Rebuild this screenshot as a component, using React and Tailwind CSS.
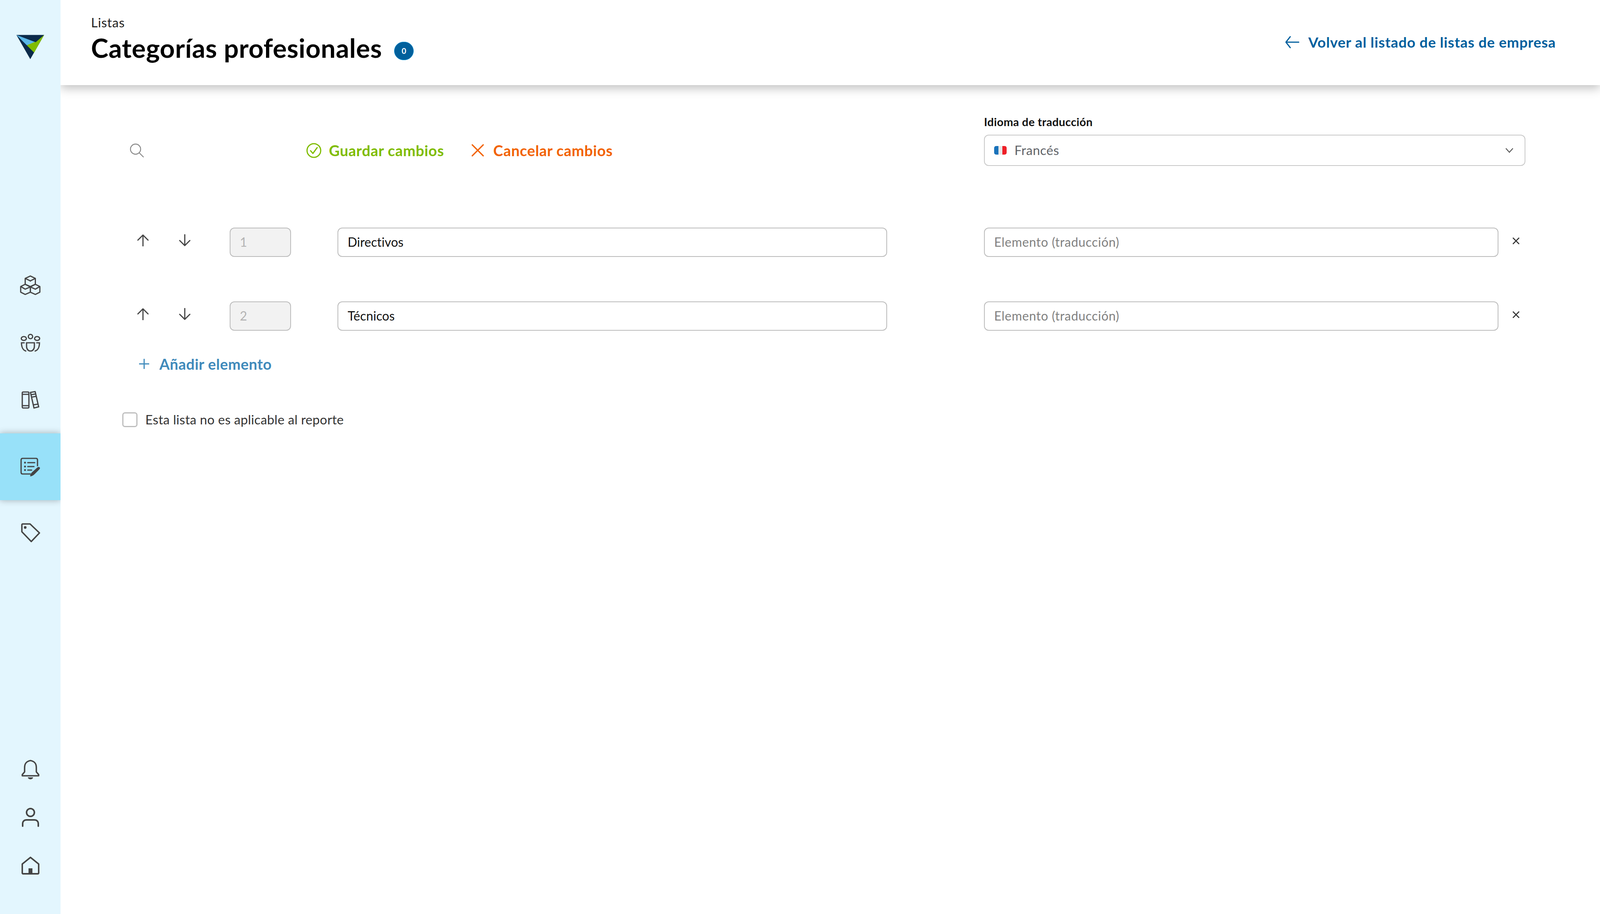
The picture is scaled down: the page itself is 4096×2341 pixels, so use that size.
import React from "react";

const INK = "#444444";

function Logo() {
  return (
    <svg width="71" height="63" viewBox="0 0 72 63">
      <path d="M0 0H72L36 63Z" fill="#0b2a4a" />
      <path d="M0 0L50 19L27 27Z" fill="#5bb7e8" />
      <path d="M27 27L48 18L50 19L72 0L46 46Z" fill="#80bc00" />
    </svg>
  );
}

function BoxesIcon() {
  return (
    <svg width="53" height="51" viewBox="-1 -1 55 53" fill="none" stroke={INK} strokeWidth="3.2" strokeLinejoin="round">
      <path d="M26.7 1L40 7.5V23L26.7 29L13 23V7.5Z" />
      <path d="M13 7.5L26.7 14L40 7.5M26.7 14V16" />
      <path d="M13 23L1 29V44L13 50L26.7 44V30L13 23Z" />
      <path d="M1 29L13 36L26.7 30" />
      <path d="M40 23L52 29V44L40 50L26.7 44V30L40 23Z" />
      <path d="M26.7 30L40 36L52 29" />
    </svg>
  );
}

function PeopleIcon() {
  return (
    <svg width="50" height="46" viewBox="0 0 50 46" fill="none" stroke={INK} strokeWidth="3.2" strokeLinecap="round">
      <circle cx="25" cy="7" r="5.5" />
      <ellipse cx="8" cy="12" rx="6.5" ry="5" />
      <ellipse cx="42" cy="12" rx="6.5" ry="5" />
      <path d="M15 23H35V32C35 39 31 44 25 44C19 44 15 39 15 32Z" />
      <path d="M9 23H2C2 34 6 42 13 44" />
      <path d="M41 23H48C48 34 44 42 37 44" />
    </svg>
  );
}

function BooksIcon() {
  return (
    <svg width="46" height="46" viewBox="0 0 46 46" fill="none" stroke={INK} strokeWidth="3.2" strokeLinejoin="round">
      <rect x="2" y="3" width="17" height="41" rx="2.5" />
      <path d="M2 9H19M2 38H19" />
      <path d="M23 4L35 2L44 41L32 44Z" />
      <path d="M24.5 10L36.5 8M27 16L38 14M30 36L42 34" />
    </svg>
  );
}

function ListEditIcon() {
  return (
    <svg width="51" height="50" viewBox="0 0 51 50" fill="none" stroke={INK} className="mt-[3px]">
      <path d="M26 42H6C3.5 42 2 40.5 2 38V6C2 3.5 3.5 2 6 2H40C42.5 2 44 3.5 44 6V21" strokeWidth="3.2" strokeLinecap="round" />
      <circle cx="12" cy="13" r="2.4" fill={INK} stroke="none" />
      <circle cx="12" cy="23" r="2.4" fill={INK} stroke="none" />
      <circle cx="12" cy="32" r="2.4" fill={INK} stroke="none" />
      <path d="M19 13H37M19 23H35M19 32H29" strokeWidth="3" strokeLinecap="round" />
      <path d="M25 48C26 41 30 37 34 34L44 25C47 23 50 24 50.5 27C50 29 48 31 46 33L37 42C33 46 29 48 25 48Z" fill={INK} stroke="none" />
    </svg>
  );
}

function TagIcon() {
  return (
    <svg width="50" height="50" viewBox="0 0 50 50" fill="none" stroke={INK} strokeWidth="3.6" strokeLinejoin="round">
      <path d="M3 4C3 3 4 2 5 2H24L48 25L27 47L3 22Z" />
      <ellipse cx="11.5" cy="11" rx="3.4" ry="3.4" fill={INK} stroke="none" />
    </svg>
  );
}

function BellIcon() {
  return (
    <svg width="46" height="50" viewBox="0 0 46 50" fill="none" stroke={INK} strokeWidth="3.6" strokeLinejoin="round">
      <path d="M23 2C13 4 8 9 8 20V31L2 38V41H44V38L38 31V20C38 9 33 4 23 2Z" />
      <path d="M16 45H30C29 49 25 50 23 50C21 50 17 49 16 45Z" fill={INK} stroke="none" />
    </svg>
  );
}

function UserIcon() {
  return (
    <svg width="46" height="50" viewBox="0 0 46 50" fill="none" stroke={INK} strokeWidth="4" strokeLinecap="round">
      <circle cx="23" cy="12" r="10" />
      <path d="M3 47V41C3 35 7 31 13 31H33C39 31 43 35 43 41V47" />
    </svg>
  );
}

function HomeIcon() {
  return (
    <svg width="46" height="46" viewBox="0 0 46 46" fill="none" stroke={INK} strokeWidth="3.8" strokeLinejoin="round">
      <path d="M23 2L44 19V42C44 43 43 44 42 44H4C3 44 2 43 2 42V19Z" />
      <rect x="18" y="30" width="10" height="14" fill={INK} stroke="none" />
    </svg>
  );
}

function VArrow({ down }) {
  return (
    <svg width="30" height="31" viewBox="0 0 30 31" fill="none" stroke={INK} strokeWidth="3" strokeLinecap="round" strokeLinejoin="round" className={down ? "rotate-180" : ""}>
      <path d="M15 30V2M2 15L15 2L28 15" />
    </svg>
  );
}

function Row({ n, value }) {
  return (
    <div className="flex pl-[158px]">
      <div className="flex w-[551px] items-center">
        <div className="flex w-[275px] items-center pb-[11px]">
          <span className="ml-[38px] w-[107px]"><VArrow /></span>
          <VArrow down />
        </div>
        <input
          readOnly
          disabled
          value={n}
          className="h-[75px] w-[157px] rounded-[12px] border-2 border-[#bbbbbb] bg-[#f2f2f2] px-[24px] pb-[2px] text-[32px] text-[#b3b3b3] outline-none"
        />
      </div>
      <input
        readOnly
        value={value}
        className="h-[75px] w-[1407px] rounded-[12px] border-2 border-[#bbbbbb] bg-white px-[24px] pb-[2px] text-[32px] tracking-[0.1px] text-[#111111] outline-none"
      />
      <div className="ml-[248px] flex items-center">
        <input
          readOnly
          placeholder="Elemento (traducción)"
          className="h-[75px] w-[1317px] rounded-[12px] border-2 border-[#bbbbbb] bg-white px-[24px] pb-[2px] text-[32px] tracking-[0.7px] outline-none placeholder:text-[#808080]"
        />
        <svg width="20" height="20" viewBox="0 0 20 20" fill="none" stroke="#333333" strokeWidth="2.6" className="ml-[35px] mb-[8px]">
          <path d="M2 2L18 18M18 2L2 18" />
        </svg>
      </div>
    </div>
  );
}

export default function App() {
  return (
    <div className="flex h-[2341px] w-[4096px] overflow-hidden bg-white font-[Lato,sans-serif]">
      <aside className="relative z-10 flex w-[155px] shrink-0 flex-col overflow-hidden bg-[#e3f6fe]">
        <div className="flex justify-center pt-[89px]">
          <Logo />
        </div>
        <nav className="mt-[505px] flex flex-col">
          <div className="flex h-[147px] items-center justify-center"><BoxesIcon /></div>
          <div className="flex h-[147px] items-center justify-center"><PeopleIcon /></div>
          <div className="flex h-[146px] items-center justify-center"><BooksIcon /></div>
          <div className="mt-[13px] flex h-[171px] items-center justify-center bg-[#98e1f9] shadow-[0_0_16px_rgba(0,0,0,0.3)]"><ListEditIcon /></div>
          <div className="mt-[10px] flex h-[147px] items-center justify-center"><TagIcon /></div>
        </nav>
        <div className="mt-auto flex flex-col pb-[63px]">
          <div className="flex h-[123px] items-center justify-center"><BellIcon /></div>
          <div className="flex h-[123px] items-center justify-center"><UserIcon /></div>
          <div className="flex h-[123px] items-center justify-center"><HomeIcon /></div>
        </div>
      </aside>

      <main className="flex min-w-0 flex-1 flex-col">
        <header className="relative flex h-[218px] shrink-0 items-start justify-between bg-white pl-[78px] pr-[113px] shadow-[0_8px_24px_rgba(0,0,0,0.25)]">
          <div className="pt-[38px]">
            <p className="text-[33px] leading-[38px] tracking-[0.8px] text-[#222222]">Listas</p>
            <div className="mt-[7px] flex items-center">
              <h1 className="text-[67px] font-bold leading-[78px] tracking-[0.6px] text-black">Categorías profesionales</h1>
              <span className="ml-[31px] mt-[16px] flex h-[47px] w-[50px] items-center justify-center rounded-full border border-[#0091d5] bg-[#00609c] text-[20px] font-bold leading-none text-white">0</span>
            </div>
          </div>
          <a className="mt-[88px] flex items-center text-[37px] font-bold leading-[40px] tracking-[0.85px] text-[#005f9e]">
            <svg width="36" height="32" viewBox="0 0 36 32" fill="none" stroke="#005f9e" strokeWidth="3" strokeLinecap="round" strokeLinejoin="round" className="mr-[23px]">
              <path d="M35 16H2M13 2L2 16L13 30" />
            </svg>
            Volver al listado de listas de empresa
          </a>
        </header>

        <section className="flex pl-[158px] pt-[79px]">
          <div className="flex w-[1958px] items-center pt-[48px]">
            <svg width="37" height="37" viewBox="0 0 37 37" fill="none" stroke="#888888" strokeWidth="2.4" strokeLinecap="round" className="ml-[19px]">
              <circle cx="15" cy="15" r="13" />
              <path d="M25 25L35 35" />
            </svg>
            <svg width="39" height="39" viewBox="0 0 39 39" fill="none" stroke="#7fbc00" strokeWidth="3" strokeLinecap="round" strokeLinejoin="round" className="ml-[415px]">
              <circle cx="19.5" cy="19.5" r="17.5" />
              <path d="M11 20L17 27L28 12" />
            </svg>
            <span className="ml-[19px] text-[38px] font-bold tracking-[0.7px] text-[#7fbc00]">Guardar cambios</span>
            <svg width="32" height="32" viewBox="0 0 32 32" fill="none" stroke="#f26200" strokeWidth="3.2" strokeLinecap="round" className="ml-[70px]">
              <path d="M2 2L30 30M30 2L2 30" />
            </svg>
            <span className="ml-[24px] text-[38px] font-bold tracking-[0.7px] text-[#f26200]">Cancelar cambios</span>
          </div>
          <div className="ml-[248px] w-[1386px]">
            <label className="block pb-[2px] text-[29px] font-bold leading-[30px] tracking-[0.38px] text-[#111111]">Idioma de traducción</label>
            <div className="mt-[16px] flex h-[80px] items-center rounded-[12px] border-2 border-[#c8c8c8] bg-white pl-[24px] pr-[28px]">
              <svg width="32" height="22" viewBox="0 0 32 22" className="overflow-hidden rounded-[5px]">
                <rect width="11" height="22" fill="#1a73bb" />
                <rect x="11" width="10" height="22" fill="#e9e9e9" />
                <rect x="21" width="11" height="22" fill="#ee2028" />
              </svg>
              <span className="ml-[20px] text-[33px] tracking-[0.5px] text-[#5f6368]">Francés</span>
              <svg width="22" height="14" viewBox="0 0 22 14" fill="none" stroke="#555555" strokeWidth="2.4" className="ml-auto">
                <path d="M2 2L11 12L20 2" />
              </svg>
            </div>
          </div>
        </section>

        <div className="mt-[158px] flex flex-col gap-y-[114px]">
          <Row n="1" value="Directivos" />
          <Row n="2" value="Técnicos" />
        </div>

        <div className="ml-[201px] mt-[55px] flex h-[60px] items-center text-[38px] font-bold tracking-[0.5px] text-[#3f8abb]">
          <svg width="26" height="26" viewBox="0 0 26 26" fill="none" stroke="#3f8abb" strokeWidth="3" strokeLinecap="round" className="mr-[26px]">
            <path d="M13 1V25M1 13H25" />
          </svg>
          Añadir elemento
        </div>

        <label className="ml-[158px] mt-[88px] flex items-center text-[33px] tracking-[0.3px] text-[#333333]">
          <span className="h-[38px] w-[39px] rounded-[7px] border-[3px] border-[#bdbdbd] bg-white" />
          <span className="ml-[20px]">Esta lista no es aplicable al reporte</span>
        </label>
      </main>
    </div>
  );
}
